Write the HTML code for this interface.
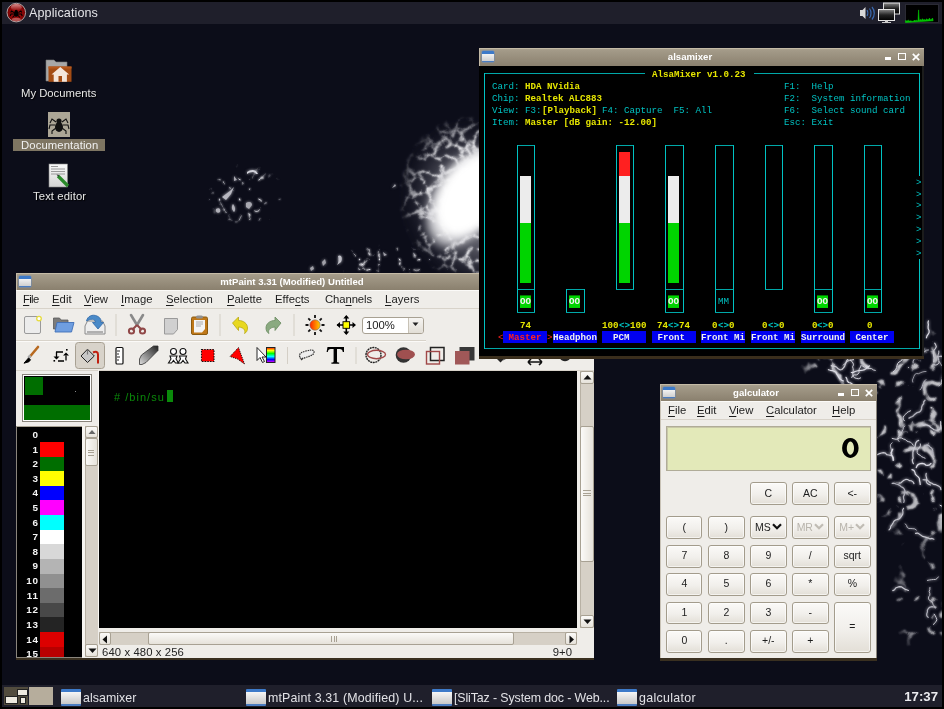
<!DOCTYPE html><html><head><meta charset="utf-8"><style>
*{margin:0;padding:0;box-sizing:border-box}
html,body{width:944px;height:709px;overflow:hidden;background:#0c0d19;font-family:"Liberation Sans",sans-serif;}
.a{position:absolute}
#scr{position:absolute;left:0;top:0;width:944px;height:709px;overflow:hidden;background:#0c0d19}
.t{position:absolute;white-space:pre;line-height:1;will-change:transform}
.tm{position:absolute;white-space:pre;font-family:'Liberation Mono',monospace;font-size:9.18px;line-height:11.95px;height:11.95px;transform:translateY(0.6px) scaleY(1.06);transform-origin:0 50%;will-change:transform}
u{text-decoration:underline;text-underline-offset:1.5px}
</style></head><body><div id="scr"><svg class="a" style="left:0;top:0" width="944" height="709" viewBox="0 0 944 709"><defs><filter id="wisp" x="0" y="0" width="944" height="709" filterUnits="userSpaceOnUse"><feTurbulence type="turbulence" baseFrequency="0.065" numOctaves="4" seed="5" result="n"/><feColorMatrix in="n" type="matrix" values="0 0 0 0 0.82  0 0 0 0 0.82  0 0 0 0 0.85  -4.6 0 0 0 1.3" result="m"/><feComposite in="m" in2="SourceGraphic" operator="in" result="c"/><feGaussianBlur in="c" stdDeviation="1.0" result="b"/><feMerge><feMergeNode in="b"/><feMergeNode in="c"/></feMerge></filter><filter id="wisp2" x="0" y="0" width="944" height="709" filterUnits="userSpaceOnUse"><feTurbulence type="turbulence" baseFrequency="0.03" numOctaves="3" seed="4" result="n"/><feColorMatrix in="n" type="matrix" values="0 0 0 0 0.85  0 0 0 0 0.85  0 0 0 0 0.88  -11 0 0 0 1.5" result="m"/><feComposite in="m" in2="SourceGraphic" operator="in" result="c"/><feGaussianBlur in="c" stdDeviation="1.3" result="b"/><feMerge><feMergeNode in="b"/><feMergeNode in="b"/><feMergeNode in="c"/></feMerge></filter><filter id="wisp3" x="0" y="0" width="944" height="709" filterUnits="userSpaceOnUse"><feTurbulence type="turbulence" baseFrequency="0.05" numOctaves="3" seed="9" result="n"/><feColorMatrix in="n" type="matrix" values="0 0 0 0 0.8  0 0 0 0 0.8  0 0 0 0 0.84  -9 0 0 0 1.0" result="m"/><feComposite in="m" in2="SourceGraphic" operator="in" result="c"/><feGaussianBlur in="c" stdDeviation="1.1" result="b"/><feMerge><feMergeNode in="b"/><feMergeNode in="b"/><feMergeNode in="c"/></feMerge></filter><radialGradient id="mask1" cx="0.5" cy="0.5" r="0.5"><stop offset="0" stop-color="#fff" stop-opacity="1"/><stop offset="0.65" stop-color="#fff" stop-opacity="0.85"/><stop offset="1" stop-color="#fff" stop-opacity="0"/></radialGradient><radialGradient id="halo" cx="0.5" cy="0.5" r="0.5"><stop offset="0" stop-color="#a0a0a8" stop-opacity="1"/><stop offset="0.6" stop-color="#7a7a84" stop-opacity="0.6"/><stop offset="1" stop-color="#505060" stop-opacity="0"/></radialGradient><radialGradient id="core" cx="0.5" cy="0.5" r="0.5"><stop offset="0" stop-color="#fff"/><stop offset="0.55" stop-color="#fcfcfc"/><stop offset="0.8" stop-color="#d8d8dc" stop-opacity="0.85"/><stop offset="1" stop-color="#a0a0a8" stop-opacity="0"/></radialGradient><filter id="blur3"><feGaussianBlur stdDeviation="3"/></filter><filter id="blur5"><feGaussianBlur stdDeviation="5"/></filter><filter id="blur8"><feGaussianBlur stdDeviation="8"/></filter><filter id="glow" x="-20%" y="-20%" width="140%" height="140%"><feGaussianBlur stdDeviation="1.4" result="b"/><feMerge><feMergeNode in="b"/><feMergeNode in="SourceGraphic"/></feMerge></filter></defs><ellipse cx="478" cy="205" rx="70" ry="82" transform="rotate(-25 478 205)" fill="url(#halo)" filter="url(#blur8)"/><ellipse cx="480" cy="203" rx="80" ry="90" transform="rotate(-25 480 203)" fill="url(#mask1)" filter="url(#wisp)"/><g filter="url(#wisp3)"><ellipse cx="385" cy="262" rx="55" ry="18" fill="url(#mask1)"/><ellipse cx="245" cy="195" rx="40" ry="32" fill="url(#mask1)" opacity="0.9"/></g><ellipse cx="466" cy="198" rx="60" ry="36" fill="url(#core)" transform="rotate(-58 466 198)" filter="url(#blur3)"/><ellipse cx="472" cy="194" rx="44" ry="27" fill="#fff" transform="rotate(-58 472 194)" filter="url(#blur5)"/><g filter="url(#wisp2)" opacity="0.8"><ellipse cx="930" cy="440" rx="78" ry="115" fill="url(#mask1)"/><ellipse cx="935" cy="600" rx="45" ry="60" fill="url(#mask1)" opacity="0.6"/><ellipse cx="862" cy="368" rx="62" ry="22" fill="url(#mask1)"/></g><g filter="url(#glow)"><polyline points="909.0,418.1 910.7,417.2 912.6,416.5 914.0,415.1 915.5,413.7 917.1,412.6 919.1,412.2 920.6,410.9 921.6,409.2 921.6,407.2 922.4,405.3 923.7,403.8 923.7,401.8 925.0,400.3" fill="none" stroke="#b0b0ba" stroke-width="1.3" stroke-linecap="round" stroke-linejoin="round"/><polyline points="921.9,424.6 923.7,425.4 925.6,424.8 927.6,425.3 929.4,426.1 930.8,427.5 932.5,428.6 934.1,429.8 936.0,430.3 938.0,430.1 939.9,429.3 940.7,427.5 940.5,425.5 940.7,423.5 940.6,421.5" fill="none" stroke="#c8c8d0" stroke-width="1.1" stroke-linecap="round" stroke-linejoin="round"/><polyline points="939.6,361.8 940.2,363.7 941.7,365.0 942.7,366.8 943.8,368.4 944.1,370.4 944.8,372.3 944.1,374.2 942.7,375.5 942.4,377.5 943.0,379.4 942.4,381.4 942.0,383.3 940.4,384.5 939.0,386.0" fill="none" stroke="#c8c8d0" stroke-width="0.8" stroke-linecap="round" stroke-linejoin="round"/><polyline points="920.3,443.9 920.5,445.9 919.5,447.6 917.9,448.8 917.2,450.7 917.2,452.7 918.2,454.4 920.1,455.2 921.4,456.6 923.3,457.4 925.1,458.2" fill="none" stroke="#c8c8d0" stroke-width="1.0" stroke-linecap="round" stroke-linejoin="round"/><polyline points="892.2,438.4 894.1,438.9 896.1,439.3 898.0,438.8 899.7,437.8 901.7,438.0 903.5,439.0 905.4,439.5 906.8,441.0 908.6,441.7 910.6,442.2 912.0,443.6 913.2,445.2" fill="none" stroke="#dcdce4" stroke-width="0.9" stroke-linecap="round" stroke-linejoin="round"/><polyline points="943.3,377.2 942.3,378.9 941.6,380.8 942.1,382.7 943.3,384.3 944.2,386.1 946.0,387.0 948.0,387.4 949.8,388.3 951.8,388.1 953.8,388.1 955.5,389.1" fill="none" stroke="#dcdce4" stroke-width="0.9" stroke-linecap="round" stroke-linejoin="round"/><polyline points="904.7,426.0 903.4,427.5 903.0,429.5 902.2,431.3 901.3,433.1 900.0,434.6 898.9,436.3 897.8,438.0 897.9,440.0 899.1,441.5" fill="none" stroke="#c8c8d0" stroke-width="0.9" stroke-linecap="round" stroke-linejoin="round"/><polyline points="912.8,382.1 912.4,380.1 913.2,378.3 913.9,376.4 914.7,374.6 916.4,373.5 918.4,373.7 920.2,372.9 922.1,372.1 924.0,371.6 926.0,371.5" fill="none" stroke="#b0b0ba" stroke-width="0.8" stroke-linecap="round" stroke-linejoin="round"/><polyline points="893.6,460.0 893.3,458.0 892.4,456.2 890.6,455.3 888.6,455.0 886.7,454.7 885.4,453.1 883.4,452.6 881.5,453.0 879.6,453.6 877.8,454.6" fill="none" stroke="#c8c8d0" stroke-width="1.2" stroke-linecap="round" stroke-linejoin="round"/><polyline points="913.4,463.7 912.6,461.9 912.3,459.9 913.2,458.2 912.9,456.2 912.9,454.2 912.9,452.2 913.5,450.3 913.6,448.3 915.0,446.9 915.4,444.9 915.8,442.9 916.9,441.3 918.7,440.4" fill="none" stroke="#c8c8d0" stroke-width="1.2" stroke-linecap="round" stroke-linejoin="round"/><polyline points="925.0,445.6 927.0,445.1 928.9,445.6 930.3,447.1 931.8,448.3 932.7,450.1 932.7,452.1 932.4,454.1" fill="none" stroke="#b0b0ba" stroke-width="1.1" stroke-linecap="round" stroke-linejoin="round"/><polyline points="904.5,420.8 903.2,419.2 903.2,417.2 904.2,415.5 905.7,414.2 907.0,412.6 908.7,411.6 910.5,410.8" fill="none" stroke="#c8c8d0" stroke-width="1.0" stroke-linecap="round" stroke-linejoin="round"/><polyline points="933.7,361.9 933.9,359.9 934.2,357.9 933.7,356.0 933.7,354.0 933.7,352.0 934.1,350.0 935.4,348.6 936.3,346.7 935.7,344.8 934.7,343.1" fill="none" stroke="#c8c8d0" stroke-width="1.1" stroke-linecap="round" stroke-linejoin="round"/><polyline points="893.0,372.0 894.6,370.9 895.8,369.3 896.7,367.5 897.0,365.5 897.6,363.6 898.9,362.1 900.7,361.2 902.0,359.7 902.5,357.8 902.3,355.8 903.2,354.0 903.4,352.0 902.5,350.2" fill="none" stroke="#dcdce4" stroke-width="1.0" stroke-linecap="round" stroke-linejoin="round"/><polyline points="937.3,356.8 939.3,356.5 941.3,356.2 943.1,357.0 944.4,358.5 945.9,359.8 947.4,361.2 948.5,362.8 949.0,364.8" fill="none" stroke="#b0b0ba" stroke-width="1.2" stroke-linecap="round" stroke-linejoin="round"/><polyline points="920.0,389.8 921.3,388.3 922.2,386.5 922.7,384.6 923.5,382.8 924.5,381.0 925.9,379.6" fill="none" stroke="#b0b0ba" stroke-width="1.0" stroke-linecap="round" stroke-linejoin="round"/><polyline points="892.2,442.8 890.7,444.2 890.3,446.1 890.9,448.0 891.4,450.0 891.5,452.0 892.0,453.9" fill="none" stroke="#c8c8d0" stroke-width="0.8" stroke-linecap="round" stroke-linejoin="round"/><polyline points="892.7,449.2 891.9,451.1 891.0,452.9 891.5,454.8 892.6,456.5 893.0,458.4 893.2,460.4" fill="none" stroke="#dcdce4" stroke-width="1.3" stroke-linecap="round" stroke-linejoin="round"/><polyline points="912.0,469.6 913.9,470.4 914.9,472.2 915.3,474.1 916.7,475.6 918.2,476.9 919.4,478.5 919.5,480.5 920.0,482.5 920.2,484.5" fill="none" stroke="#dcdce4" stroke-width="1.2" stroke-linecap="round" stroke-linejoin="round"/><polyline points="931.0,463.4 929.6,464.8 927.7,465.4 925.7,465.1 924.2,463.8 922.2,463.4 920.3,463.7 918.4,464.3 917.1,465.8 916.3,467.6" fill="none" stroke="#dcdce4" stroke-width="1.3" stroke-linecap="round" stroke-linejoin="round"/><polyline points="940.9,489.6 940.5,487.7 939.0,486.3 937.3,485.4 935.4,484.6 933.4,484.4 931.9,483.2 929.9,482.6 928.5,481.2 927.0,479.9 925.0,479.9 923.0,479.7" fill="none" stroke="#c8c8d0" stroke-width="1.1" stroke-linecap="round" stroke-linejoin="round"/><polyline points="940.1,505.3 941.9,506.2 943.4,507.6 943.8,509.5 944.2,511.5 943.4,513.3 943.8,515.3 944.8,517.0 945.8,518.7 947.3,520.1 948.2,521.8 948.8,523.7 949.3,525.7 948.9,527.6 948.3,529.5" fill="none" stroke="#dcdce4" stroke-width="1.0" stroke-linecap="round" stroke-linejoin="round"/><polyline points="915.5,533.4 917.5,533.1 919.3,534.1 921.0,535.2 922.5,536.4 924.5,536.9 926.4,537.4 928.3,538.0 930.1,538.9 932.1,538.4 933.9,539.3" fill="none" stroke="#c8c8d0" stroke-width="1.1" stroke-linecap="round" stroke-linejoin="round"/><polyline points="916.4,530.1 914.8,528.9 912.9,528.7 910.9,528.5 908.9,528.5 907.2,527.4 906.6,525.5 905.3,523.9" fill="none" stroke="#b0b0ba" stroke-width="1.0" stroke-linecap="round" stroke-linejoin="round"/><polyline points="903.8,502.5 904.2,500.6 903.6,498.6 903.4,496.6 904.3,494.9 904.3,492.9 905.0,491.0 904.3,489.1 903.0,487.6 901.2,486.7 899.7,485.4 897.9,484.5 896.0,484.0 894.1,483.2 892.2,483.4" fill="none" stroke="#b0b0ba" stroke-width="1.2" stroke-linecap="round" stroke-linejoin="round"/><polyline points="903.6,508.3 902.6,510.0 902.9,512.0 902.8,514.0 901.8,515.7 900.6,517.3 899.3,518.8 897.4,519.5 895.5,520.0 893.9,521.3 893.0,523.1 891.9,524.8 890.7,526.3 890.4,528.3 889.0,529.8" fill="none" stroke="#c8c8d0" stroke-width="1.1" stroke-linecap="round" stroke-linejoin="round"/><polyline points="914.0,483.6 913.0,481.9 911.3,480.7 909.3,480.6 907.7,479.5 905.7,479.4 903.9,480.3 902.3,481.5 900.9,482.9 898.9,483.2" fill="none" stroke="#c8c8d0" stroke-width="1.1" stroke-linecap="round" stroke-linejoin="round"/><polyline points="930.4,485.0 928.6,484.3 927.0,483.1 926.3,481.2 926.9,479.3 926.4,477.4 925.9,475.4 926.2,473.4" fill="none" stroke="#c8c8d0" stroke-width="1.1" stroke-linecap="round" stroke-linejoin="round"/><polyline points="927.4,580.4 929.4,580.0 931.4,579.7 933.4,579.5 935.4,579.5 937.1,578.5 938.3,576.9" fill="none" stroke="#c8c8d0" stroke-width="0.9" stroke-linecap="round" stroke-linejoin="round"/><polyline points="933.6,624.5 934.7,622.8 936.2,621.5 936.8,619.6 936.2,617.7 935.3,615.9 934.2,614.2" fill="none" stroke="#c8c8d0" stroke-width="1.0" stroke-linecap="round" stroke-linejoin="round"/><polyline points="908.4,590.5 906.6,589.8 904.7,589.1 903.1,587.9 901.4,586.8 899.4,586.6 897.5,587.3 895.6,588.0 894.6,589.7 892.8,590.6" fill="none" stroke="#c8c8d0" stroke-width="1.2" stroke-linecap="round" stroke-linejoin="round"/><polyline points="928.2,617.3 926.8,615.9 926.7,613.9 927.4,612.0 927.4,610.0 928.5,608.3 930.1,607.1 932.0,606.6 934.0,607.0 936.0,607.1" fill="none" stroke="#b0b0ba" stroke-width="1.2" stroke-linecap="round" stroke-linejoin="round"/><polyline points="935.2,608.2 934.6,606.3 933.2,604.8 932.6,602.9 931.5,601.3 929.6,600.5 928.5,598.9 928.6,596.9 929.8,595.3 929.8,593.3 929.2,591.4 929.8,589.5 929.9,587.5" fill="none" stroke="#c8c8d0" stroke-width="0.9" stroke-linecap="round" stroke-linejoin="round"/><polyline points="850.3,360.1 851.9,361.4 853.0,363.0 853.5,364.9 852.6,366.8 853.1,368.7 853.3,370.7 852.7,372.6 852.9,374.6 853.3,376.6 854.8,377.9 856.8,378.5 858.7,378.7 860.6,377.9" fill="none" stroke="#dcdce4" stroke-width="0.9" stroke-linecap="round" stroke-linejoin="round"/><polyline points="875.3,370.4 873.3,369.9 871.8,368.7 869.8,368.5 867.8,368.1 866.2,367.0 864.2,367.1 862.5,366.0" fill="none" stroke="#dcdce4" stroke-width="0.9" stroke-linecap="round" stroke-linejoin="round"/><polyline points="853.6,359.7 851.6,360.0 849.6,360.3 847.8,361.1 846.1,362.2 844.8,363.7 843.4,365.1" fill="none" stroke="#dcdce4" stroke-width="1.0" stroke-linecap="round" stroke-linejoin="round"/><polyline points="843.5,381.0 841.6,380.3 840.2,379.0 838.9,377.4 837.9,375.7 836.7,374.1 835.9,372.2 834.2,371.2 832.3,370.6 830.3,370.3 828.4,369.7" fill="none" stroke="#dcdce4" stroke-width="1.2" stroke-linecap="round" stroke-linejoin="round"/><polyline points="846.0,377.3 846.9,379.1 847.3,381.0 848.7,382.5 850.6,382.9 852.2,384.1 852.9,386.0 854.4,387.3 854.8,389.3 855.9,391.0 856.4,392.9 858.0,394.1 859.7,395.2 861.7,395.2" fill="none" stroke="#dcdce4" stroke-width="1.2" stroke-linecap="round" stroke-linejoin="round"/><polyline points="847.8,359.3 846.6,360.9 846.0,362.8 845.2,364.6 844.5,366.5 843.2,368.1 841.9,369.5 839.9,369.8 838.1,368.8 836.8,367.3 835.0,366.4 833.0,366.5 831.3,365.6" fill="none" stroke="#c8c8d0" stroke-width="1.2" stroke-linecap="round" stroke-linejoin="round"/><polyline points="861.2,365.1 860.6,367.0 859.4,368.5 858.9,370.5 859.1,372.4 858.0,374.1 856.2,375.0 854.2,374.8 852.5,375.8 851.7,377.6" fill="none" stroke="#dcdce4" stroke-width="0.9" stroke-linecap="round" stroke-linejoin="round"/><polyline points="851.3,372.5 853.3,372.5 855.0,371.5 856.9,371.0 858.9,370.5 860.9,370.5 862.8,370.1 864.7,369.6 866.3,368.4 867.6,366.9 869.4,365.9" fill="none" stroke="#dcdce4" stroke-width="1.2" stroke-linecap="round" stroke-linejoin="round"/><polyline points="926.4,337.8 927.0,335.8 928.2,334.2 929.1,332.5 929.1,330.5 928.2,328.7 928.1,326.7 928.4,324.7 928.0,322.7 928.4,320.8" fill="none" stroke="#dcdce4" stroke-width="1.2" stroke-linecap="round" stroke-linejoin="round"/><polyline points="928.5,350.0 926.5,350.2 924.9,351.4 923.3,352.5 921.6,353.7 919.7,354.3 918.1,355.5 916.1,356.0 914.8,357.4 914.1,359.3 913.1,361.0 913.1,363.0" fill="none" stroke="#b0b0ba" stroke-width="1.0" stroke-linecap="round" stroke-linejoin="round"/><polyline points="938.8,351.0 938.8,353.0 938.1,354.9 937.8,356.8 938.6,358.7 938.8,360.7 938.9,362.7 937.8,364.3 935.9,365.1 933.9,364.7" fill="none" stroke="#c8c8d0" stroke-width="1.0" stroke-linecap="round" stroke-linejoin="round"/></g><g filter="url(#glow)"><path d="M222 197l8-6 4-4-3 7-5 6z" fill="#b8b8c0"/><path d="M247 172c4-3 9-3 11 2l-2 0c-2-3-6-2-9 0z" fill="#d0d0d8"/><path d="M216 209c3-2 5 0 4 3-2 2-5 0-4-3z" fill="#b0b0b8"/><path d="M233 204c2 3 3 6 1 8-2-2-3-5-1-8z" fill="#b0b0b8"/><path d="M246 203c3-2 6-1 6 2l-3 4-3-2z" fill="#a8a8b0"/><path d="M234 176l3 4-3 1z" fill="#a8a8b0"/><path d="M338 256c3-2 5 2 3 6l-4 3c2-3 2-6 1-9z" fill="#c0c0c8"/><path d="M322 262l3-3 1 4-3 3z" fill="#a0a0a8"/><path d="M310 268l3-2 1 3-3 2z" fill="#a0a0a8"/><path d="M392 188l3-4 1 2z" fill="#a0a0a8"/><path d="M383 252l4 3-3 1z" fill="#a0a0a8"/></g></svg><svg class="a" style="left:44px;top:58px" width="30" height="26" viewBox="44 58 30 26"><path d="M46 60h8l2 2h11v19h-21z" fill="#a8a8a8" stroke="#777" stroke-width="0.6"/><rect x="48.5" y="66.5" width="23" height="15.3" fill="#a44c14"/><rect x="48.5" y="66.5" width="23" height="2" fill="#b85a1e"/><path d="M51.5 74.5l8.8-7.5 8.8 7.5h-2.2v7.3h-13.2v-7.3z" fill="#f4e6dc"/><rect x="58.5" y="76" width="3.5" height="5.8" fill="#a44c14"/></svg><div class="t" style="left:21.3px;top:87.5px;font-size:11.3px;color:#e6e6e6;font-weight:normal;letter-spacing:-0.004px;text-shadow:1px 1px 1px #000">My Documents</div><div class="a" style="left:48px;top:111.5px;width:21.5px;height:25px;background:#aca696;"></div><svg class="a" style="left:48px;top:112px" width="22" height="24" viewBox="0 0 22 24"><g stroke="#111" stroke-width="1.1" fill="none"><path d="M8 10l-4-3-2 4M14 10l4-3 2 4M7 13l-5 0-1 4M15 13l5 0 1 4M8 16l-4 3 0 3M14 16l4 3 0 3"/></g><ellipse cx="11" cy="15" rx="4" ry="5" fill="#111"/><circle cx="11" cy="9" r="2.6" fill="#111"/></svg><div class="a" style="left:12.8px;top:138.8px;width:92.2px;height:12px;background:#7e7562;"></div><div class="t" style="left:20.5px;top:139.5px;font-size:11.3px;color:#f0f0f0;font-weight:normal;letter-spacing:0.109px;">Documentation</div><svg class="a" style="left:46px;top:162px" width="28" height="28" viewBox="46 162 28 28"><defs><linearGradient id="pgw" x1="0" y1="0" x2="0" y2="1"><stop offset="0" stop-color="#fafafa"/><stop offset="1" stop-color="#d4d4d4"/></linearGradient></defs><rect x="49" y="164" width="18.5" height="23" fill="url(#pgw)" stroke="#888" stroke-width="0.6"/><path d="M51 166.5h7M51 169h14M51 171.5h14M51 174h14" stroke="#9a9a9a" stroke-width="1.1"/><path d="M58 176l10 10" stroke="#2a8a2a" stroke-width="3.2"/><path d="M56.5 174.5l2.5 0.5-0.5 2z" fill="#333"/></svg><div class="t" style="left:32.5px;top:190.5px;font-size:11.3px;color:#e6e6e6;font-weight:normal;letter-spacing:0.098px;text-shadow:1px 1px 1px #000">Text editor</div><div class="a" style="left:16px;top:273px;width:578px;height:387px;background:#efede9;"></div><div class="a" style="left:16px;top:273px;width:578px;height:17px;background:linear-gradient(#aea592 0,#a49b89 2px,#8a806e 100%);box-shadow:inset 1px 1px 0 #c4baa6"></div><div class="a" style="left:19px;top:276px;width:12px;height:11px;border-radius:1px;background:linear-gradient(#3d7ac9 0,#3d7ac9 3px,#f2f2f2 3px,#cfcfcf 10px,#4a7cc0 10px);box-shadow:0 0 0 0.5px #6a8ab8"></div><div class="t" style="left:192px;top:277px;width:200px;text-align:center;font-size:9.6px;font-weight:bold;color:#fff">mtPaint 3.31 (Modified) Untitled</div><div class="a" style="left:16px;top:290px;width:578px;height:19px;background:#efede9;border-top:1px solid #fbfaf8;border-bottom:1px solid #d8d3ca"></div><div class="t" style="left:23.2px;top:293.5px;font-size:11.3px;color:#1c1c1c;font-weight:normal;letter-spacing:-0.676px;"><u>F</u>ile</div><div class="t" style="left:51.7px;top:293.5px;font-size:11.3px;color:#1c1c1c;font-weight:normal;letter-spacing:0.033px;"><u>E</u>dit</div><div class="t" style="left:83.7px;top:293.5px;font-size:11.3px;color:#1c1c1c;font-weight:normal;letter-spacing:-0.099px;"><u>V</u>iew</div><div class="t" style="left:120.8px;top:293.5px;font-size:11.3px;color:#1c1c1c;font-weight:normal;letter-spacing:0.019px;"><u>I</u>mage</div><div class="t" style="left:166.3px;top:293.5px;font-size:11.3px;color:#1c1c1c;font-weight:normal;letter-spacing:0.024px;"><u>S</u>election</div><div class="t" style="left:226.8px;top:293.5px;font-size:11.3px;color:#1c1c1c;font-weight:normal;letter-spacing:-0.039px;"><u>P</u>alette</div><div class="t" style="left:275.0px;top:293.5px;font-size:11.3px;color:#1c1c1c;font-weight:normal;letter-spacing:0.025px;">Effe<u>c</u>ts</div><div class="t" style="left:324.5px;top:293.5px;font-size:11.3px;color:#1c1c1c;font-weight:normal;letter-spacing:-0.092px;">Cha<u>n</u>nels</div><div class="t" style="left:384.9px;top:293.5px;font-size:11.3px;color:#1c1c1c;font-weight:normal;letter-spacing:0.113px;"><u>L</u>ayers</div><div class="a" style="left:16px;top:340px;width:410px;height:1px;background:#d8d3ca;"></div><div class="a" style="left:16px;top:341px;width:410px;height:1px;background:#fbfaf8;"></div><div class="a" style="left:16px;top:370px;width:578px;height:1px;background:#d8d3ca;"></div><svg class="a" style="left:16px;top:309px" width="578" height="61" viewBox="16 309 578 61"><rect x="24.5" y="316.5" width="16" height="17" rx="1.5" fill="#ececec" stroke="#9a9a9a" stroke-width="1"/><circle cx="39" cy="318.6" r="2.3" fill="#fff" stroke="#e6dc3c" stroke-width="1.3"/><path d="M53.5 318h6l1.5 2h7v9h-14.5z" fill="#7b7b7b" stroke="#5a5a5a" stroke-width="0.8"/><path d="M57 322.5h17l-2.5 9.5h-16.5z" fill="#6f9ee0" stroke="#3f6fb8" stroke-width="0.9"/><path d="M85 326l2.5-5h15l2.5 5v8h-20z" fill="#eee" stroke="#8a8a8a" stroke-width="1"/><rect x="87" y="331" width="16" height="2" fill="#b0b0b0"/><path d="M86.5 321c1-5 6-7 10.5-5s4 5 4 6.5h2.5l-5.5 6.5-5.5-6.5h2.8c0-1.8-0.8-3-3-3.2s-4 1-5.8 1.7z" fill="#4a8ac8" stroke="#2e68a8" stroke-width="0.8"/><rect x="115.5" y="314" width="1" height="22" fill="#d4cfc6"/><path d="M131 315l6 10M143 315l-6 10" stroke="#8a8a8a" stroke-width="2.6" stroke-linecap="round"/><path d="M137 325l-5 5M137 325l5 5" stroke="#904848" stroke-width="2"/><circle cx="131.5" cy="331" r="2.6" fill="none" stroke="#904848" stroke-width="2"/><circle cx="142.5" cy="331" r="2.6" fill="none" stroke="#904848" stroke-width="2"/><path d="M164.5 318.5h13v11l-4 4.5h-9z" fill="#d0d0d0" stroke="#9a9a9a" stroke-width="1"/><rect x="191.5" y="317" width="16" height="17.5" rx="1.5" fill="#c07818" stroke="#8a5a10" stroke-width="1"/><path d="M194 320h11v9l-3 3.5h-8z" fill="#f4f4f4"/><rect x="196" y="315.5" width="7" height="3" rx="1.5" fill="#909090"/><path d="M196 322h7M196 324h7M196 326h5" stroke="#999" stroke-width="0.8"/><rect x="219.5" y="314" width="1" height="22" fill="#d4cfc6"/><path d="M232.5 323l6-6v3.5c5 0 9 3 9 7.5 0 2.5-1 4.5-3 5.5 1-2 0.5-6-6-6.5v3.5z" fill="#e8d820" stroke="#b8a810" stroke-width="0.8"/><path d="M281 323l-6-6v3.5c-5 0-9 3-9 7.5 0 2.5 1 4.5 3 5.5-1-2-0.5-6 6-6.5v3.5z" fill="#8aaa80" stroke="#6a8a60" stroke-width="0.8"/><rect x="293.5" y="314" width="1" height="22" fill="#d4cfc6"/><defs><linearGradient id="sung" x1="0" x2="1"><stop offset="0" stop-color="#ff2000"/><stop offset="1" stop-color="#ffd000"/></linearGradient></defs><path d="M315 315v3M315 332v3M305.5 325h3M321.5 325h3M308.3 318.3l2 2M319.7 329.7l2 2M321.7 318.3l-2 2M310.3 329.7l-2 2" stroke="#111" stroke-width="1.8"/><circle cx="315" cy="325" r="5.2" fill="url(#sung)" stroke="#777" stroke-width="0.6"/><path d="M346.3 316v18M337 325h18" stroke="#000" stroke-width="1.6"/><path d="M346.3 315l-3 3.5h6zM346.3 335l-3-3.5h6zM336.5 325l3.5-3v6zM356 325l-3.5-3v6z" fill="#000"/><rect x="343" y="321.7" width="6.6" height="6.6" fill="#ffff00" stroke="#000" stroke-width="0.9"/><path d="M38 347l-8 9.5" stroke="#b86a20" stroke-width="2.6" stroke-linecap="round"/><path d="M30.5 355.5l-2 2.5" stroke="#aaa" stroke-width="3"/><path d="M28.5 358l-4.5 5.2 5-1.5 1.5-2z" fill="#000" stroke="#000" stroke-width="1"/><path d="M56 352h7M58 361h6M56.5 352v5M66 360.5v-5" stroke="#000" stroke-width="1.3"/><path d="M53.5 356.5h6l-3 3zM63 355.5h6l-3-3z" fill="#000"/><rect x="66" y="349" width="1.6" height="1.6" fill="#000"/><rect x="53.5" y="360" width="1.6" height="1.6" fill="#000"/><rect x="75.5" y="342.5" width="29" height="26" rx="3" fill="#d8d3ca" stroke="#a8a193" stroke-width="1"/><path d="M81 356l6.5-6.8 6.8 6.8-6.8 6.5z" fill="#c8c8c8" stroke="#222" stroke-width="1"/><path d="M87.5 349.5v5" stroke="#777" stroke-width="1.2"/><path d="M93 352.5c3-1.5 5-0.5 5 2v9" stroke="#c02010" stroke-width="2" fill="none"/><rect x="116" y="347.5" width="7" height="16.5" rx="1" fill="#fff" stroke="#111" stroke-width="1.2"/><path d="M117 351h3M117 354h2M117 357h3M117 360h2" stroke="#111" stroke-width="0.9"/><defs><linearGradient id="pg" x1="0" y1="1" x2="1" y2="0"><stop offset="0" stop-color="#ddd"/><stop offset="1" stop-color="#222"/></linearGradient></defs><path d="M139.5 359l2-4 12-9h4.5v4.5l-12 12-4 2h-2.5z" fill="url(#pg)" stroke="#333" stroke-width="0.8"/><g fill="#fff" stroke="#111" stroke-width="1.1"><circle cx="173.5" cy="351.5" r="3"/><circle cx="183" cy="351.5" r="3"/><path d="M170 356h7l-1 3 2.5 4h-3l-2-2.5-2 2.5h-3l2.5-4z"/><path d="M179.5 356h7l-1 3 2.5 4h-3l-2-2.5-2 2.5h-3l2.5-4z"/></g><rect x="201.5" y="349.5" width="12.5" height="12" fill="#f00" stroke="#111" stroke-width="1.1" stroke-dasharray="1.5 1.2"/><path d="M238.5 347.5l-8.5 9 7.5 2.5 7 5z" fill="#f00" stroke="#111" stroke-width="0.9" stroke-dasharray="1.2 1"/><defs><linearGradient id="rb" x1="0" y1="0" x2="0" y2="1"><stop offset="0" stop-color="#f00"/><stop offset="0.2" stop-color="#ff0"/><stop offset="0.4" stop-color="#0f0"/><stop offset="0.6" stop-color="#0ff"/><stop offset="0.8" stop-color="#00f"/><stop offset="1" stop-color="#f0f"/></linearGradient></defs><rect x="266.5" y="347.5" width="8.5" height="15" fill="url(#rb)" stroke="#222" stroke-width="1"/><path d="M257 347.5v13l3-3 2.5 5 2-1-2.5-4.5h4z" fill="#fff" stroke="#111" stroke-width="0.9"/><rect x="287" y="347" width="1" height="17" fill="#d4cfc6"/><path d="M300 357c-2-3 2-5 6-6s8-2 8 1-4 4-7 5-7 3-7 0z" fill="#eee" stroke="#333" stroke-width="1.2" stroke-dasharray="1.5 0.8"/><path d="M301 360l2-2" stroke="#333" stroke-width="1.2"/><path d="M327.5 347h16.5v5h-1.2c-0.4-2.2-1.2-3-3-3h-2.8v12.3c0 1 0.5 1.3 2.2 1.3v1.2h-7.8v-1.2c1.7 0 2.2-0.3 2.2-1.3v-12.3h-2.8c-1.8 0-2.6 0.8-3 3h-1.2z" fill="#000"/><rect x="355.5" y="347" width="1" height="17" fill="#d4cfc6"/><circle cx="373.5" cy="355" r="7.5" fill="none" stroke="#222" stroke-width="1.4" stroke-dasharray="2 0.6"/><ellipse cx="376.5" cy="354.5" rx="9" ry="4.2" fill="none" stroke="#a04848" stroke-width="1.4"/><circle cx="403.5" cy="355" r="7.8" fill="#333"/><ellipse cx="406" cy="354.5" rx="9" ry="4.8" fill="#a05050"/><rect x="430.5" y="347.5" width="13.5" height="13" fill="none" stroke="#222" stroke-width="1.5"/><rect x="426.5" y="351.5" width="13" height="12.5" fill="none" stroke="#a04848" stroke-width="1.4"/><rect x="459.5" y="347" width="15" height="13.5" fill="#383838"/><rect x="455" y="351" width="14.5" height="13.5" fill="#a05858"/><path d="M496 358l4.5 4.5 4.5-4.5z" fill="#222"/><path d="M503 360l3-1.5" stroke="#555" stroke-width="1"/><path d="M528 362h14M528 362l3-3M528 362l3 3M542 362l-3-3M542 362l-3 3" stroke="#111" stroke-width="1.6" fill="none"/><path d="M560 358.5c2 3.5 8 3.5 10 0z" fill="#222"/></svg><div class="a" style="left:362px;top:316.5px;width:62px;height:17px;background:#fff;border:1px solid #a8a193;border-radius:3px"></div><div class="a" style="left:408px;top:317.5px;width:15px;height:15px;background:linear-gradient(#f6f5f2,#e2ded6);border-left:1px solid #c8c2b6;border-radius:0 2px 2px 0"></div><svg class="a" style="left:412px;top:322px" width="8" height="5"><path d="M0.5 0.5h6l-3 3.5z" fill="#222"/></svg><div class="t" style="left:366px;top:320px;font-size:11.3px;color:#222;font-weight:normal;">100%</div><div class="a" style="left:24px;top:376px;width:66px;height:44px;background:#000;box-shadow:0 0 0 1px #fff,0 0 0 2px #8a857c"></div><div class="a" style="left:25px;top:377px;width:18px;height:18px;background:#006e00;"></div><div class="a" style="left:24px;top:405px;width:66px;height:15px;background:#006e00;"></div><div class="a" style="left:75px;top:391px;width:1px;height:1px;background:#888;"></div><div class="a" style="left:16px;top:425.5px;width:66px;height:231.5px;background:#000;border-left:1px solid #8a857c;border-top:1px solid #a8a294"></div><div class="t" style="left:12px;top:429.90px;width:26.5px;text-align:right;font-size:9.9px;font-weight:bold;color:#f4f4f4;letter-spacing:0.6px">0</div><div class="a" style="left:40px;top:441.92px;width:24px;height:15.22px;background:#ff0000;"></div><div class="t" style="left:12px;top:444.52px;width:26.5px;text-align:right;font-size:9.9px;font-weight:bold;color:#f4f4f4;letter-spacing:0.6px">1</div><div class="a" style="left:40px;top:456.54px;width:24px;height:15.22px;background:#006e00;"></div><div class="t" style="left:12px;top:459.14px;width:26.5px;text-align:right;font-size:9.9px;font-weight:bold;color:#f4f4f4;letter-spacing:0.6px">2</div><div class="a" style="left:40px;top:471.16px;width:24px;height:15.22px;background:#ffff00;"></div><div class="t" style="left:12px;top:473.76px;width:26.5px;text-align:right;font-size:9.9px;font-weight:bold;color:#f4f4f4;letter-spacing:0.6px">3</div><div class="a" style="left:40px;top:485.78px;width:24px;height:15.22px;background:#0000ff;"></div><div class="t" style="left:12px;top:488.38px;width:26.5px;text-align:right;font-size:9.9px;font-weight:bold;color:#f4f4f4;letter-spacing:0.6px">4</div><div class="a" style="left:40px;top:500.4px;width:24px;height:15.22px;background:#ff00ff;"></div><div class="t" style="left:12px;top:503.00px;width:26.5px;text-align:right;font-size:9.9px;font-weight:bold;color:#f4f4f4;letter-spacing:0.6px">5</div><div class="a" style="left:40px;top:515.02px;width:24px;height:15.22px;background:#00ffff;"></div><div class="t" style="left:12px;top:517.62px;width:26.5px;text-align:right;font-size:9.9px;font-weight:bold;color:#f4f4f4;letter-spacing:0.6px">6</div><div class="a" style="left:40px;top:529.64px;width:24px;height:15.22px;background:#ffffff;"></div><div class="t" style="left:12px;top:532.24px;width:26.5px;text-align:right;font-size:9.9px;font-weight:bold;color:#f4f4f4;letter-spacing:0.6px">7</div><div class="a" style="left:40px;top:544.26px;width:24px;height:15.22px;background:#d8d8d8;"></div><div class="t" style="left:12px;top:546.86px;width:26.5px;text-align:right;font-size:9.9px;font-weight:bold;color:#f4f4f4;letter-spacing:0.6px">8</div><div class="a" style="left:40px;top:558.88px;width:24px;height:15.22px;background:#b4b4b4;"></div><div class="t" style="left:12px;top:561.48px;width:26.5px;text-align:right;font-size:9.9px;font-weight:bold;color:#f4f4f4;letter-spacing:0.6px">9</div><div class="a" style="left:40px;top:573.5px;width:24px;height:15.22px;background:#909090;"></div><div class="t" style="left:12px;top:576.10px;width:26.5px;text-align:right;font-size:9.9px;font-weight:bold;color:#f4f4f4;letter-spacing:0.6px">10</div><div class="a" style="left:40px;top:588.12px;width:24px;height:15.22px;background:#6c6c6c;"></div><div class="t" style="left:12px;top:590.72px;width:26.5px;text-align:right;font-size:9.9px;font-weight:bold;color:#f4f4f4;letter-spacing:0.6px">11</div><div class="a" style="left:40px;top:602.74px;width:24px;height:15.22px;background:#484848;"></div><div class="t" style="left:12px;top:605.34px;width:26.5px;text-align:right;font-size:9.9px;font-weight:bold;color:#f4f4f4;letter-spacing:0.6px">12</div><div class="a" style="left:40px;top:617.36px;width:24px;height:15.22px;background:#242424;"></div><div class="t" style="left:12px;top:619.96px;width:26.5px;text-align:right;font-size:9.9px;font-weight:bold;color:#f4f4f4;letter-spacing:0.6px">13</div><div class="a" style="left:40px;top:631.98px;width:24px;height:15.22px;background:#dd0000;"></div><div class="t" style="left:12px;top:634.58px;width:26.5px;text-align:right;font-size:9.9px;font-weight:bold;color:#f4f4f4;letter-spacing:0.6px">14</div><div class="a" style="left:40px;top:646.6px;width:24px;height:10.5px;background:#b80000;"></div><div class="t" style="left:12px;top:649.20px;width:26.5px;text-align:right;font-size:9.9px;font-weight:bold;color:#f4f4f4;letter-spacing:0.6px">15</div><div class="a" style="left:16px;top:657px;width:66px;height:1px;background:#8a857c;"></div><div class="a" style="left:82px;top:426px;width:3px;height:231px;background:#f6f4f0;"></div><div class="a" style="left:85px;top:426px;width:13px;height:231px;background:#d6d0c6;border-left:1px solid #b8b1a4"></div><div class="a" style="left:85px;top:426px;width:13px;height:12px;background:linear-gradient(#fbfaf8,#e6e2da);border:1px solid #a8a193;border-radius:2px"></div><svg class="a" style="left:88px;top:429px" width="8" height="6"><path d="M0.5 5h7l-3.5-4z" fill="#666"/></svg><div class="a" style="left:85px;top:438px;width:13px;height:28px;background:linear-gradient(90deg,#fbfaf8,#e6e2da);border:1px solid #a8a193;border-radius:2px"></div><div class="a" style="left:88px;top:449.5px;width:6px;height:1px;background:#a8a193;"></div><div class="a" style="left:88px;top:452px;width:6px;height:1px;background:#a8a193;"></div><div class="a" style="left:88px;top:454.5px;width:6px;height:1px;background:#a8a193;"></div><div class="a" style="left:85px;top:644px;width:13px;height:13px;background:linear-gradient(#fbfaf8,#e6e2da);border:1px solid #a8a193;border-radius:2px"></div><svg class="a" style="left:87.5px;top:648px" width="9" height="6"><path d="M0.5 0.5h8l-4 4.5z" fill="#111"/></svg><div class="a" style="left:98px;top:370px;width:1px;height:258px;background:#f8f6f2;"></div><div class="a" style="left:99px;top:371px;width:478px;height:257px;background:#000;"></div><div class="t" style="left:113.5px;top:392px;font-size:11px;color:#0a8a0a;font-weight:normal;letter-spacing:1.023px;"># /bin/su</div><div class="a" style="left:167px;top:390px;width:6px;height:12px;background:#0a8a0a;"></div><div class="a" style="left:580px;top:371px;width:14px;height:257px;background:#d6d0c6;border-left:1px solid #b8b1a4"></div><div class="a" style="left:580px;top:371px;width:14px;height:13px;background:linear-gradient(#fbfaf8,#e6e2da);border:1px solid #a8a193;border-radius:2px"></div><svg class="a" style="left:583px;top:374px" width="9" height="6"><path d="M0.5 5.5h8l-4-4.5z" fill="#111"/></svg><div class="a" style="left:580px;top:426px;width:14px;height:136px;background:linear-gradient(90deg,#fbfaf8,#e6e2da);border:1px solid #a8a193;border-radius:2px"></div><div class="a" style="left:583px;top:490px;width:8px;height:1px;background:#a8a193;"></div><div class="a" style="left:583px;top:492.5px;width:8px;height:1px;background:#a8a193;"></div><div class="a" style="left:583px;top:495px;width:8px;height:1px;background:#a8a193;"></div><div class="a" style="left:580px;top:615px;width:14px;height:13px;background:linear-gradient(#fbfaf8,#e6e2da);border:1px solid #a8a193;border-radius:2px"></div><svg class="a" style="left:583px;top:619px" width="9" height="6"><path d="M0.5 0.5h8l-4 4.5z" fill="#111"/></svg><div class="a" style="left:99px;top:632px;width:478px;height:13px;background:#d6d0c6;border-top:1px solid #b8b1a4"></div><div class="a" style="left:99px;top:632px;width:12px;height:13px;background:linear-gradient(#fbfaf8,#e6e2da);border:1px solid #a8a193;border-radius:2px"></div><svg class="a" style="left:102px;top:634.5px" width="6" height="9"><path d="M5 0.5v8l-4.5-4z" fill="#111"/></svg><div class="a" style="left:148px;top:632px;width:366px;height:13px;background:linear-gradient(#fbfaf8,#e6e2da);border:1px solid #a8a193;border-radius:2px"></div><div class="a" style="left:331px;top:635.5px;width:1px;height:6px;background:#a8a193;"></div><div class="a" style="left:333.5px;top:635.5px;width:1px;height:6px;background:#a8a193;"></div><div class="a" style="left:336px;top:635.5px;width:1px;height:6px;background:#a8a193;"></div><div class="a" style="left:564.5px;top:632px;width:12.5px;height:13px;background:linear-gradient(#fbfaf8,#e6e2da);border:1px solid #a8a193;border-radius:2px"></div><svg class="a" style="left:568.5px;top:634.5px" width="6" height="9"><path d="M0.5 0.5v8l4.5-4z" fill="#111"/></svg><div class="t" style="left:102px;top:647px;font-size:11.3px;color:#222;font-weight:normal;letter-spacing:0.106px;">640 x 480 x 256</div><div class="t" style="left:472px;top:647px;width:100px;text-align:right;font-size:11.3px;color:#222">9+0</div><div class="a" style="left:16px;top:658px;width:578px;height:2px;background:#3a3020;"></div><div class="a" style="left:479px;top:48px;width:445px;height:310px;background:#000;"></div><div class="a" style="left:479px;top:48px;width:445px;height:18px;background:linear-gradient(#aea592 0,#a49b89 2px,#8a806e 100%);box-shadow:inset 1px 1px 0 #c4baa6"></div><div class="a" style="left:482px;top:51px;width:12px;height:11px;border-radius:1px;background:linear-gradient(#3d7ac9 0,#3d7ac9 3px,#f2f2f2 3px,#cfcfcf 10px,#4a7cc0 10px);box-shadow:0 0 0 0.5px #6a8ab8"></div><div class="t" style="left:590px;top:52px;width:200px;text-align:center;font-size:9.6px;font-weight:bold;color:#fff">alsamixer</div><div class="a" style="left:885px;top:57.2px;width:5.6px;height:2.6px;background:#fff;"></div><div class="a" style="left:898px;top:52.8px;width:7.6px;height:7.2px;border:1.2px solid #fff;border-top-width:1.6px"></div><svg class="a" style="left:911.5px;top:52.5px" width="8" height="8"><path d="M0.8 0.8L7.2 7.2M7.2 0.8L0.8 7.2" stroke="#fff" stroke-width="1.7"/></svg><div class="a" style="left:479.00px;top:66.00px;width:443.00px;height:290.00px;background:#000"></div><div class="a" style="left:483.65px;top:73.47px;width:161.19px;height:1.00px;background:#00a8a8"></div><div class="a" style="left:753.64px;top:73.47px;width:166.70px;height:1.00px;background:#00a8a8"></div><div class="a" style="left:483.65px;top:348.32px;width:436.69px;height:1.00px;background:#00a8a8"></div><div class="a" style="left:483.65px;top:73.47px;width:1.00px;height:275.85px;background:#00c2c2"></div><div class="a" style="left:918.94px;top:73.47px;width:1.00px;height:102.58px;background:#00c2c2"></div><div class="a" style="left:918.94px;top:258.70px;width:1.00px;height:90.62px;background:#00c2c2"></div><div class="tm" style="left:916.29px;top:175.55px;color:#00c2c2;">&gt;</div><div class="tm" style="left:916.29px;top:187.50px;color:#00c2c2;">&gt;</div><div class="tm" style="left:916.29px;top:199.45px;color:#00c2c2;">&gt;</div><div class="tm" style="left:916.29px;top:211.40px;color:#00c2c2;">&gt;</div><div class="tm" style="left:916.29px;top:223.35px;color:#00c2c2;">&gt;</div><div class="tm" style="left:916.29px;top:235.30px;color:#00c2c2;">&gt;</div><div class="tm" style="left:916.29px;top:247.25px;color:#00c2c2;">&gt;</div><div class="tm" style="left:651.81px;top:68.00px;color:#e6e600;font-weight:bold;">AlsaMixer v1.0.23</div><div class="tm" style="left:492.02px;top:79.95px;color:#00c2c2;">Card:</div><div class="tm" style="left:525.08px;top:79.95px;color:#e6e600;font-weight:bold;">HDA NVidia</div><div class="tm" style="left:492.02px;top:91.90px;color:#00c2c2;">Chip:</div><div class="tm" style="left:525.08px;top:91.90px;color:#e6e600;font-weight:bold;">Realtek ALC883</div><div class="tm" style="left:492.02px;top:103.85px;color:#00c2c2;">View:</div><div class="tm" style="left:525.08px;top:103.85px;color:#00c2c2;">F3:</div><div class="tm" style="left:541.61px;top:103.85px;color:#e6e600;font-weight:bold;">[Playback]</div><div class="tm" style="left:602.22px;top:103.85px;color:#00c2c2;">F4: Capture  F5: All</div><div class="tm" style="left:492.02px;top:115.80px;color:#00c2c2;">Item:</div><div class="tm" style="left:525.08px;top:115.80px;color:#e6e600;font-weight:bold;">Master [dB gain: -12.00]</div><div class="tm" style="left:784.05px;top:79.95px;color:#00c2c2;">F1:  Help</div><div class="tm" style="left:784.05px;top:91.90px;color:#00c2c2;">F2:  System information</div><div class="tm" style="left:784.05px;top:103.85px;color:#00c2c2;">F6:  Select sound card</div><div class="tm" style="left:784.05px;top:115.80px;color:#00c2c2;">Esc: Exit</div><div class="a" style="left:516.72px;top:145.18px;width:18.53px;height:1.00px;background:#00a8a8"></div><div class="a" style="left:516.72px;top:145.18px;width:1.00px;height:144.40px;background:#00c2c2"></div><div class="a" style="left:534.25px;top:145.18px;width:1.00px;height:144.40px;background:#00c2c2"></div><div class="a" style="left:516.72px;top:288.57px;width:18.53px;height:1.00px;background:#00a8a8"></div><div class="a" style="left:519.57px;top:175.55px;width:11.02px;height:47.80px;background:#ececec"></div><div class="a" style="left:519.57px;top:223.35px;width:11.02px;height:59.75px;background:#00d400"></div><div class="a" style="left:516.72px;top:288.57px;width:18.53px;height:1.00px;background:#00a8a8"></div><div class="a" style="left:516.72px;top:288.57px;width:1.00px;height:24.90px;background:#00c2c2"></div><div class="a" style="left:534.25px;top:288.57px;width:1.00px;height:24.90px;background:#00c2c2"></div><div class="a" style="left:516.72px;top:312.48px;width:18.53px;height:1.00px;background:#00a8a8"></div><div class="tm" style="left:519.57px;top:295.05px;color:#f0f0f0;background:#00d400;font-weight:bold;">OO</div><div class="tm" style="left:519.57px;top:318.95px;color:#e6e600;font-weight:bold;">74</div><div class="a" style="left:503.04px;top:330.90px;width:44.08px;height:11.95px;background:#0000f0"></div><div class="tm" style="left:503.04px;top:330.90px;color:#ff2020;font-weight:bold;"> Master </div><div class="a" style="left:566.30px;top:288.57px;width:18.53px;height:1.00px;background:#00a8a8"></div><div class="a" style="left:566.30px;top:288.57px;width:1.00px;height:24.90px;background:#00c2c2"></div><div class="a" style="left:583.83px;top:288.57px;width:1.00px;height:24.90px;background:#00c2c2"></div><div class="a" style="left:566.30px;top:312.48px;width:18.53px;height:1.00px;background:#00a8a8"></div><div class="tm" style="left:569.16px;top:295.05px;color:#f0f0f0;background:#00d400;font-weight:bold;">OO</div><div class="a" style="left:552.63px;top:330.90px;width:44.08px;height:11.95px;background:#0000f0"></div><div class="tm" style="left:552.63px;top:330.90px;color:#f0f0f0;font-weight:bold;">Headphon</div><div class="a" style="left:615.89px;top:145.18px;width:18.53px;height:1.00px;background:#00a8a8"></div><div class="a" style="left:615.89px;top:145.18px;width:1.00px;height:144.40px;background:#00c2c2"></div><div class="a" style="left:633.42px;top:145.18px;width:1.00px;height:144.40px;background:#00c2c2"></div><div class="a" style="left:615.89px;top:288.57px;width:18.53px;height:1.00px;background:#00a8a8"></div><div class="a" style="left:618.75px;top:151.65px;width:11.02px;height:23.90px;background:#ff2020"></div><div class="a" style="left:618.75px;top:175.55px;width:11.02px;height:47.80px;background:#ececec"></div><div class="a" style="left:618.75px;top:223.35px;width:11.02px;height:59.75px;background:#00d400"></div><div class="tm" style="left:602.22px;top:318.95px;color:#e6e600;font-weight:bold;">100</div><div class="tm" style="left:618.75px;top:318.95px;color:#00c2c2;font-weight:bold;">&lt;&gt;</div><div class="tm" style="left:629.77px;top:318.95px;color:#e6e600;font-weight:bold;">100</div><div class="a" style="left:602.22px;top:330.90px;width:44.08px;height:11.95px;background:#0000f0"></div><div class="tm" style="left:602.22px;top:330.90px;color:#f0f0f0;font-weight:bold;">  PCM   </div><div class="a" style="left:665.49px;top:145.18px;width:18.53px;height:1.00px;background:#00a8a8"></div><div class="a" style="left:665.49px;top:145.18px;width:1.00px;height:144.40px;background:#00c2c2"></div><div class="a" style="left:683.01px;top:145.18px;width:1.00px;height:144.40px;background:#00c2c2"></div><div class="a" style="left:665.49px;top:288.57px;width:18.53px;height:1.00px;background:#00a8a8"></div><div class="a" style="left:668.34px;top:175.55px;width:11.02px;height:47.80px;background:#ececec"></div><div class="a" style="left:668.34px;top:223.35px;width:11.02px;height:59.75px;background:#00d400"></div><div class="a" style="left:665.49px;top:288.57px;width:18.53px;height:1.00px;background:#00a8a8"></div><div class="a" style="left:665.49px;top:288.57px;width:1.00px;height:24.90px;background:#00c2c2"></div><div class="a" style="left:683.01px;top:288.57px;width:1.00px;height:24.90px;background:#00c2c2"></div><div class="a" style="left:665.49px;top:312.48px;width:18.53px;height:1.00px;background:#00a8a8"></div><div class="tm" style="left:668.34px;top:295.05px;color:#f0f0f0;background:#00d400;font-weight:bold;">OO</div><div class="tm" style="left:657.32px;top:318.95px;color:#e6e600;font-weight:bold;">74</div><div class="tm" style="left:668.34px;top:318.95px;color:#00c2c2;font-weight:bold;">&lt;&gt;</div><div class="tm" style="left:679.36px;top:318.95px;color:#e6e600;font-weight:bold;">74</div><div class="a" style="left:651.81px;top:330.90px;width:44.08px;height:11.95px;background:#0000f0"></div><div class="tm" style="left:651.81px;top:330.90px;color:#f0f0f0;font-weight:bold;"> Front  </div><div class="a" style="left:715.07px;top:145.18px;width:18.53px;height:1.00px;background:#00a8a8"></div><div class="a" style="left:715.07px;top:145.18px;width:1.00px;height:144.40px;background:#00c2c2"></div><div class="a" style="left:732.60px;top:145.18px;width:1.00px;height:144.40px;background:#00c2c2"></div><div class="a" style="left:715.07px;top:288.57px;width:18.53px;height:1.00px;background:#00a8a8"></div><div class="a" style="left:715.07px;top:288.57px;width:18.53px;height:1.00px;background:#00a8a8"></div><div class="a" style="left:715.07px;top:288.57px;width:1.00px;height:24.90px;background:#00c2c2"></div><div class="a" style="left:732.60px;top:288.57px;width:1.00px;height:24.90px;background:#00c2c2"></div><div class="a" style="left:715.07px;top:312.48px;width:18.53px;height:1.00px;background:#00a8a8"></div><div class="tm" style="left:717.93px;top:295.05px;color:#00c2c2;">MM</div><div class="tm" style="left:712.42px;top:318.95px;color:#e6e600;font-weight:bold;">0</div><div class="tm" style="left:717.93px;top:318.95px;color:#00c2c2;font-weight:bold;">&lt;&gt;</div><div class="tm" style="left:728.95px;top:318.95px;color:#e6e600;font-weight:bold;">0</div><div class="a" style="left:701.40px;top:330.90px;width:44.08px;height:11.95px;background:#0000f0"></div><div class="tm" style="left:701.40px;top:330.90px;color:#f0f0f0;font-weight:bold;">Front Mi</div><div class="a" style="left:764.66px;top:145.18px;width:18.53px;height:1.00px;background:#00a8a8"></div><div class="a" style="left:764.66px;top:145.18px;width:1.00px;height:144.40px;background:#00c2c2"></div><div class="a" style="left:782.20px;top:145.18px;width:1.00px;height:144.40px;background:#00c2c2"></div><div class="a" style="left:764.66px;top:288.57px;width:18.53px;height:1.00px;background:#00a8a8"></div><div class="tm" style="left:762.01px;top:318.95px;color:#e6e600;font-weight:bold;">0</div><div class="tm" style="left:767.52px;top:318.95px;color:#00c2c2;font-weight:bold;">&lt;&gt;</div><div class="tm" style="left:778.54px;top:318.95px;color:#e6e600;font-weight:bold;">0</div><div class="a" style="left:750.99px;top:330.90px;width:44.08px;height:11.95px;background:#0000f0"></div><div class="tm" style="left:750.99px;top:330.90px;color:#f0f0f0;font-weight:bold;">Front Mi</div><div class="a" style="left:814.25px;top:145.18px;width:18.53px;height:1.00px;background:#00a8a8"></div><div class="a" style="left:814.25px;top:145.18px;width:1.00px;height:144.40px;background:#00c2c2"></div><div class="a" style="left:831.78px;top:145.18px;width:1.00px;height:144.40px;background:#00c2c2"></div><div class="a" style="left:814.25px;top:288.57px;width:18.53px;height:1.00px;background:#00a8a8"></div><div class="a" style="left:814.25px;top:288.57px;width:18.53px;height:1.00px;background:#00a8a8"></div><div class="a" style="left:814.25px;top:288.57px;width:1.00px;height:24.90px;background:#00c2c2"></div><div class="a" style="left:831.78px;top:288.57px;width:1.00px;height:24.90px;background:#00c2c2"></div><div class="a" style="left:814.25px;top:312.48px;width:18.53px;height:1.00px;background:#00a8a8"></div><div class="tm" style="left:817.11px;top:295.05px;color:#f0f0f0;background:#00d400;font-weight:bold;">OO</div><div class="tm" style="left:811.60px;top:318.95px;color:#e6e600;font-weight:bold;">0</div><div class="tm" style="left:817.11px;top:318.95px;color:#00c2c2;font-weight:bold;">&lt;&gt;</div><div class="tm" style="left:828.13px;top:318.95px;color:#e6e600;font-weight:bold;">0</div><div class="a" style="left:800.58px;top:330.90px;width:44.08px;height:11.95px;background:#0000f0"></div><div class="tm" style="left:800.58px;top:330.90px;color:#f0f0f0;font-weight:bold;">Surround</div><div class="a" style="left:863.84px;top:145.18px;width:18.53px;height:1.00px;background:#00a8a8"></div><div class="a" style="left:863.84px;top:145.18px;width:1.00px;height:144.40px;background:#00c2c2"></div><div class="a" style="left:881.37px;top:145.18px;width:1.00px;height:144.40px;background:#00c2c2"></div><div class="a" style="left:863.84px;top:288.57px;width:18.53px;height:1.00px;background:#00a8a8"></div><div class="a" style="left:863.84px;top:288.57px;width:18.53px;height:1.00px;background:#00a8a8"></div><div class="a" style="left:863.84px;top:288.57px;width:1.00px;height:24.90px;background:#00c2c2"></div><div class="a" style="left:881.37px;top:288.57px;width:1.00px;height:24.90px;background:#00c2c2"></div><div class="a" style="left:863.84px;top:312.48px;width:18.53px;height:1.00px;background:#00a8a8"></div><div class="tm" style="left:866.70px;top:295.05px;color:#f0f0f0;background:#00d400;font-weight:bold;">OO</div><div class="tm" style="left:866.70px;top:318.95px;color:#e6e600;font-weight:bold;">0</div><div class="a" style="left:850.17px;top:330.90px;width:44.08px;height:11.95px;background:#0000f0"></div><div class="tm" style="left:850.17px;top:330.90px;color:#f0f0f0;font-weight:bold;"> Center </div><div class="tm" style="left:497.53px;top:330.90px;color:#ff2020;">&lt;</div><div class="tm" style="left:547.12px;top:330.90px;color:#ff2020;">&gt;</div><div class="a" style="left:922px;top:66px;width:2px;height:290px;background:#1c1c1c;"></div><div class="a" style="left:479px;top:356.3px;width:445px;height:3.2px;background:#3a2e1c;"></div><div class="a" style="left:660px;top:384px;width:217px;height:276px;background:#efede9;border-left:1px solid #c8c2b6;border-right:1px solid #8a857c"></div><div class="a" style="left:660px;top:384px;width:217px;height:17px;background:linear-gradient(#aea592 0,#a49b89 2px,#8a806e 100%);box-shadow:inset 1px 1px 0 #c4baa6"></div><div class="a" style="left:663px;top:387px;width:12px;height:11px;border-radius:1px;background:linear-gradient(#3d7ac9 0,#3d7ac9 3px,#f2f2f2 3px,#cfcfcf 10px,#4a7cc0 10px);box-shadow:0 0 0 0.5px #6a8ab8"></div><div class="t" style="left:656px;top:388px;width:200px;text-align:center;font-size:9.6px;font-weight:bold;color:#fff">galculator</div><div class="a" style="left:838px;top:393.2px;width:5.6px;height:2.6px;background:#fff;"></div><div class="a" style="left:851px;top:388.8px;width:7.6px;height:7.2px;border:1.2px solid #fff;border-top-width:1.6px"></div><svg class="a" style="left:864.5px;top:388.5px" width="8" height="8"><path d="M0.8 0.8L7.2 7.2M7.2 0.8L0.8 7.2" stroke="#fff" stroke-width="1.7"/></svg><div class="a" style="left:661px;top:401px;width:215px;height:19px;background:#efede9;border-top:1px solid #fbfaf8;border-bottom:1px solid #d8d3ca"></div><div class="t" style="left:667.5px;top:404.5px;font-size:11.3px;color:#1c1c1c;font-weight:normal;text-underline-offset:1.5px"><u>F</u>ile</div><div class="t" style="left:697px;top:404.5px;font-size:11.3px;color:#1c1c1c;font-weight:normal;text-underline-offset:1.5px"><u>E</u>dit</div><div class="t" style="left:728.5px;top:404.5px;font-size:11.3px;color:#1c1c1c;font-weight:normal;text-underline-offset:1.5px"><u>V</u>iew</div><div class="t" style="left:766px;top:404.5px;font-size:11.3px;color:#1c1c1c;font-weight:normal;text-underline-offset:1.5px"><u>C</u>alculator</div><div class="t" style="left:831.5px;top:404.5px;font-size:11.3px;color:#1c1c1c;font-weight:normal;text-underline-offset:1.5px"><u>H</u>elp</div><div class="a" style="left:666px;top:426px;width:205px;height:45px;background:#e3e9b9;border:1px solid #b0ac98;box-shadow:inset 1px 1px 0 #c8c8a8"></div><svg class="a" style="left:840px;top:436px" width="20" height="24" viewBox="840 436 20 24"><path fill-rule="evenodd" fill="#000" d="M850.35 437.9a8.25 10 0 1 0 0.001 0zM850.4 441.6a3.6 6.55 0 1 0 0.001 0z"/></svg><div class="a" style="left:750.2px;top:482.2px;width:36.6px;height:22.5px;border:1px solid #a39c8c;border-radius:3px;background:linear-gradient(#fbfaf8,#f1efeb 55%,#e3dfd7);box-shadow:inset 0 0 0 1px rgba(255,255,255,0.6)"></div><div class="t" style="left:750.2px;top:487.68px;width:36.6px;text-align:center;font-size:10.5px;color:#1c1c1c;">C</div><div class="a" style="left:792.4px;top:482.2px;width:36.6px;height:22.5px;border:1px solid #a39c8c;border-radius:3px;background:linear-gradient(#fbfaf8,#f1efeb 55%,#e3dfd7);box-shadow:inset 0 0 0 1px rgba(255,255,255,0.6)"></div><div class="t" style="left:792.4px;top:487.68px;width:36.6px;text-align:center;font-size:10.5px;color:#1c1c1c;">AC</div><div class="a" style="left:834.3px;top:482.2px;width:36.6px;height:22.5px;border:1px solid #a39c8c;border-radius:3px;background:linear-gradient(#fbfaf8,#f1efeb 55%,#e3dfd7);box-shadow:inset 0 0 0 1px rgba(255,255,255,0.6)"></div><div class="t" style="left:834.3px;top:487.68px;width:36.6px;text-align:center;font-size:10.5px;color:#1c1c1c;">&lt;-</div><div class="a" style="left:665.6px;top:516.2px;width:36.6px;height:22.5px;border:1px solid #a39c8c;border-radius:3px;background:linear-gradient(#fbfaf8,#f1efeb 55%,#e3dfd7);box-shadow:inset 0 0 0 1px rgba(255,255,255,0.6)"></div><div class="t" style="left:665.6px;top:521.68px;width:36.6px;text-align:center;font-size:10.5px;color:#1c1c1c;">(</div><div class="a" style="left:708px;top:516.2px;width:36.6px;height:22.5px;border:1px solid #a39c8c;border-radius:3px;background:linear-gradient(#fbfaf8,#f1efeb 55%,#e3dfd7);box-shadow:inset 0 0 0 1px rgba(255,255,255,0.6)"></div><div class="t" style="left:708px;top:521.68px;width:36.6px;text-align:center;font-size:10.5px;color:#1c1c1c;">)</div><div class="a" style="left:750.2px;top:516.2px;width:36.6px;height:22.5px;border:1px solid #a39c8c;border-radius:3px;background:linear-gradient(#fbfaf8,#f1efeb 55%,#e3dfd7);box-shadow:inset 0 0 0 1px rgba(255,255,255,0.6)"></div><div class="t" style="left:750.2px;top:521.68px;width:36.6px;text-align:center;font-size:10.5px;color:#1c1c1c;">MS<svg width="10" height="7" style="vertical-align:1px;margin-left:1px"><path d="M1 1.2l4 4 4-4" stroke="#111" stroke-width="2.2" fill="none"/></svg></div><div class="a" style="left:792.4px;top:516.2px;width:36.6px;height:22.5px;border:1px solid #a39c8c;border-radius:3px;background:linear-gradient(#fbfaf8,#f1efeb 55%,#e3dfd7);box-shadow:inset 0 0 0 1px rgba(255,255,255,0.6)"></div><div class="t" style="left:792.4px;top:521.68px;width:36.6px;text-align:center;font-size:10.5px;color:#b8b4ac;">MR<svg width="10" height="7" style="vertical-align:1px;margin-left:1px"><path d="M1 1.2l4 4 4-4" stroke="#c0bcb4" stroke-width="2.2" fill="none"/></svg></div><div class="a" style="left:834.3px;top:516.2px;width:36.6px;height:22.5px;border:1px solid #a39c8c;border-radius:3px;background:linear-gradient(#fbfaf8,#f1efeb 55%,#e3dfd7);box-shadow:inset 0 0 0 1px rgba(255,255,255,0.6)"></div><div class="t" style="left:834.3px;top:521.68px;width:36.6px;text-align:center;font-size:10.5px;color:#b8b4ac;">M+<svg width="10" height="7" style="vertical-align:1px;margin-left:1px"><path d="M1 1.2l4 4 4-4" stroke="#c0bcb4" stroke-width="2.2" fill="none"/></svg></div><div class="a" style="left:665.6px;top:545px;width:36.6px;height:22.5px;border:1px solid #a39c8c;border-radius:3px;background:linear-gradient(#fbfaf8,#f1efeb 55%,#e3dfd7);box-shadow:inset 0 0 0 1px rgba(255,255,255,0.6)"></div><div class="t" style="left:665.6px;top:550.48px;width:36.6px;text-align:center;font-size:10.5px;color:#1c1c1c;">7</div><div class="a" style="left:708px;top:545px;width:36.6px;height:22.5px;border:1px solid #a39c8c;border-radius:3px;background:linear-gradient(#fbfaf8,#f1efeb 55%,#e3dfd7);box-shadow:inset 0 0 0 1px rgba(255,255,255,0.6)"></div><div class="t" style="left:708px;top:550.48px;width:36.6px;text-align:center;font-size:10.5px;color:#1c1c1c;">8</div><div class="a" style="left:750.2px;top:545px;width:36.6px;height:22.5px;border:1px solid #a39c8c;border-radius:3px;background:linear-gradient(#fbfaf8,#f1efeb 55%,#e3dfd7);box-shadow:inset 0 0 0 1px rgba(255,255,255,0.6)"></div><div class="t" style="left:750.2px;top:550.48px;width:36.6px;text-align:center;font-size:10.5px;color:#1c1c1c;">9</div><div class="a" style="left:792.4px;top:545px;width:36.6px;height:22.5px;border:1px solid #a39c8c;border-radius:3px;background:linear-gradient(#fbfaf8,#f1efeb 55%,#e3dfd7);box-shadow:inset 0 0 0 1px rgba(255,255,255,0.6)"></div><div class="t" style="left:792.4px;top:550.48px;width:36.6px;text-align:center;font-size:10.5px;color:#1c1c1c;">/</div><div class="a" style="left:834.3px;top:545px;width:36.6px;height:22.5px;border:1px solid #a39c8c;border-radius:3px;background:linear-gradient(#fbfaf8,#f1efeb 55%,#e3dfd7);box-shadow:inset 0 0 0 1px rgba(255,255,255,0.6)"></div><div class="t" style="left:834.3px;top:550.48px;width:36.6px;text-align:center;font-size:10.5px;color:#1c1c1c;">sqrt</div><div class="a" style="left:665.6px;top:573px;width:36.6px;height:22.5px;border:1px solid #a39c8c;border-radius:3px;background:linear-gradient(#fbfaf8,#f1efeb 55%,#e3dfd7);box-shadow:inset 0 0 0 1px rgba(255,255,255,0.6)"></div><div class="t" style="left:665.6px;top:578.48px;width:36.6px;text-align:center;font-size:10.5px;color:#1c1c1c;">4</div><div class="a" style="left:708px;top:573px;width:36.6px;height:22.5px;border:1px solid #a39c8c;border-radius:3px;background:linear-gradient(#fbfaf8,#f1efeb 55%,#e3dfd7);box-shadow:inset 0 0 0 1px rgba(255,255,255,0.6)"></div><div class="t" style="left:708px;top:578.48px;width:36.6px;text-align:center;font-size:10.5px;color:#1c1c1c;">5</div><div class="a" style="left:750.2px;top:573px;width:36.6px;height:22.5px;border:1px solid #a39c8c;border-radius:3px;background:linear-gradient(#fbfaf8,#f1efeb 55%,#e3dfd7);box-shadow:inset 0 0 0 1px rgba(255,255,255,0.6)"></div><div class="t" style="left:750.2px;top:578.48px;width:36.6px;text-align:center;font-size:10.5px;color:#1c1c1c;">6</div><div class="a" style="left:792.4px;top:573px;width:36.6px;height:22.5px;border:1px solid #a39c8c;border-radius:3px;background:linear-gradient(#fbfaf8,#f1efeb 55%,#e3dfd7);box-shadow:inset 0 0 0 1px rgba(255,255,255,0.6)"></div><div class="t" style="left:792.4px;top:578.48px;width:36.6px;text-align:center;font-size:10.5px;color:#1c1c1c;">*</div><div class="a" style="left:834.3px;top:573px;width:36.6px;height:22.5px;border:1px solid #a39c8c;border-radius:3px;background:linear-gradient(#fbfaf8,#f1efeb 55%,#e3dfd7);box-shadow:inset 0 0 0 1px rgba(255,255,255,0.6)"></div><div class="t" style="left:834.3px;top:578.48px;width:36.6px;text-align:center;font-size:10.5px;color:#1c1c1c;">%</div><div class="a" style="left:665.6px;top:601.5px;width:36.6px;height:22.5px;border:1px solid #a39c8c;border-radius:3px;background:linear-gradient(#fbfaf8,#f1efeb 55%,#e3dfd7);box-shadow:inset 0 0 0 1px rgba(255,255,255,0.6)"></div><div class="t" style="left:665.6px;top:606.98px;width:36.6px;text-align:center;font-size:10.5px;color:#1c1c1c;">1</div><div class="a" style="left:708px;top:601.5px;width:36.6px;height:22.5px;border:1px solid #a39c8c;border-radius:3px;background:linear-gradient(#fbfaf8,#f1efeb 55%,#e3dfd7);box-shadow:inset 0 0 0 1px rgba(255,255,255,0.6)"></div><div class="t" style="left:708px;top:606.98px;width:36.6px;text-align:center;font-size:10.5px;color:#1c1c1c;">2</div><div class="a" style="left:750.2px;top:601.5px;width:36.6px;height:22.5px;border:1px solid #a39c8c;border-radius:3px;background:linear-gradient(#fbfaf8,#f1efeb 55%,#e3dfd7);box-shadow:inset 0 0 0 1px rgba(255,255,255,0.6)"></div><div class="t" style="left:750.2px;top:606.98px;width:36.6px;text-align:center;font-size:10.5px;color:#1c1c1c;">3</div><div class="a" style="left:792.4px;top:601.5px;width:36.6px;height:22.5px;border:1px solid #a39c8c;border-radius:3px;background:linear-gradient(#fbfaf8,#f1efeb 55%,#e3dfd7);box-shadow:inset 0 0 0 1px rgba(255,255,255,0.6)"></div><div class="t" style="left:792.4px;top:606.98px;width:36.6px;text-align:center;font-size:10.5px;color:#1c1c1c;">-</div><div class="a" style="left:665.6px;top:630px;width:36.6px;height:22.5px;border:1px solid #a39c8c;border-radius:3px;background:linear-gradient(#fbfaf8,#f1efeb 55%,#e3dfd7);box-shadow:inset 0 0 0 1px rgba(255,255,255,0.6)"></div><div class="t" style="left:665.6px;top:635.48px;width:36.6px;text-align:center;font-size:10.5px;color:#1c1c1c;">0</div><div class="a" style="left:708px;top:630px;width:36.6px;height:22.5px;border:1px solid #a39c8c;border-radius:3px;background:linear-gradient(#fbfaf8,#f1efeb 55%,#e3dfd7);box-shadow:inset 0 0 0 1px rgba(255,255,255,0.6)"></div><div class="t" style="left:708px;top:635.48px;width:36.6px;text-align:center;font-size:10.5px;color:#1c1c1c;">.</div><div class="a" style="left:750.2px;top:630px;width:36.6px;height:22.5px;border:1px solid #a39c8c;border-radius:3px;background:linear-gradient(#fbfaf8,#f1efeb 55%,#e3dfd7);box-shadow:inset 0 0 0 1px rgba(255,255,255,0.6)"></div><div class="t" style="left:750.2px;top:635.48px;width:36.6px;text-align:center;font-size:10.5px;color:#1c1c1c;">+/-</div><div class="a" style="left:792.4px;top:630px;width:36.6px;height:22.5px;border:1px solid #a39c8c;border-radius:3px;background:linear-gradient(#fbfaf8,#f1efeb 55%,#e3dfd7);box-shadow:inset 0 0 0 1px rgba(255,255,255,0.6)"></div><div class="t" style="left:792.4px;top:635.48px;width:36.6px;text-align:center;font-size:10.5px;color:#1c1c1c;">+</div><div class="a" style="left:834.3px;top:601.5px;width:36.6px;height:51.0px;border:1px solid #a39c8c;border-radius:3px;background:linear-gradient(#fbfaf8,#f1efeb 55%,#e3dfd7);box-shadow:inset 0 0 0 1px rgba(255,255,255,0.6)"></div><div class="t" style="left:834.3px;top:621.23px;width:36.6px;text-align:center;font-size:10.5px;color:#1c1c1c;">=</div><div class="a" style="left:660px;top:658px;width:217px;height:2.5px;background:#3a3020;"></div><div class="a" style="left:2px;top:2px;width:940px;height:22px;background:#1f1f2b;"></div><svg class="a" style="left:5px;top:2px" width="24" height="22" viewBox="5 2 24 22"><defs><radialGradient id="lg" cx="0.5" cy="0.5" r="0.5"><stop offset="0" stop-color="#a01010"/><stop offset="0.75" stop-color="#8a0606"/><stop offset="1" stop-color="#6a0202"/></radialGradient><linearGradient id="lgh" x1="0" y1="0" x2="0" y2="1"><stop offset="0" stop-color="#f0b0b0" stop-opacity="0.8"/><stop offset="1" stop-color="#f0b0b0" stop-opacity="0"/></linearGradient></defs><circle cx="16.3" cy="12.6" r="9.3" fill="url(#lg)" stroke="#b8b0b0" stroke-width="0.9"/><ellipse cx="16.3" cy="7.3" rx="5.5" ry="3.2" fill="url(#lgh)"/><ellipse cx="16.3" cy="19.6" rx="4.5" ry="1.8" fill="#e8a0a0" opacity="0.5"/><ellipse cx="16.2" cy="14" rx="2.4" ry="2.8" fill="#000"/><circle cx="16.2" cy="11.2" r="1.5" fill="#000"/><path d="M14 12.5l-2.5-1.5-0.8 1.5M18.4 12.5l2.5-1.5 0.8 1.5M13.8 14h-2.8l-0.8 2M18.6 14h2.8l0.8 2M14.3 15.5l-1.8 2M18.1 15.5l1.8 2" stroke="#000" stroke-width="1.1" fill="none"/></svg><div class="t" style="left:28.5px;top:7.1px;font-size:12.6px;color:#e4e4e8;font-weight:normal;letter-spacing:0.090px;">Applications</div><svg class="a" style="left:857px;top:4px" width="20" height="18" viewBox="857 4 20 18"><path d="M860 10h2.5l3-3v12l-3-3h-2.5z" fill="#d8d8d8"/><path d="M867 10c1 1.5 1 4.5 0 6M869.5 8.5c2 2.5 2 7 0 9.5M872 7c3 3.5 3 9 0 12.5" stroke="#3a6ab0" stroke-width="1.2" fill="none"/></svg><svg class="a" style="left:876px;top:2px" width="26" height="22" viewBox="876 2 26 22"><defs><linearGradient id="scr1" x1="0" y1="0" x2="0" y2="1"><stop offset="0" stop-color="#888"/><stop offset="0.5" stop-color="#222"/><stop offset="1" stop-color="#000"/></linearGradient></defs><rect x="883.5" y="3" width="16" height="11" fill="url(#scr1)" stroke="#ddd" stroke-width="1"/><path d="M891 14v2h-2v1h5v-1h-2v-2z" fill="#bbb"/><rect x="878.5" y="9.5" width="16" height="11" fill="url(#scr1)" stroke="#e4e4e4" stroke-width="1"/><path d="M885 20.5v1.5h-3v1h9v-1h-3v-1.5z" fill="#ccc"/></svg><div class="a" style="left:904.5px;top:3.8px;width:34px;height:19.2px;background:#000;border:1px solid #2a2a34"></div><svg class="a" style="left:905px;top:4px" width="33" height="19" viewBox="905 4 33 19"><path d="M905.5 22.5v-2l1.5 0.5 1.5-0.8 1 0.9 1.5-0.3 1 0.6 1.5-0.2 1-1.2 0.8 0.8 1.2-0.5 1.5 0.6 0.6-11 0.6 10.5 1-1 1.2 0.8 1 -1.5 0.8 1.2 1.2-0.4 1 0.5 1.5-1.2 0.6 1 1.2-0.3 0.8-1.4 0.8 1.6 1.2-0.2 1 -1.5 0.6 2v0.8z" fill="#00c000" stroke="#00dd00" stroke-width="0.5"/></svg><div class="a" style="left:2px;top:685px;width:940px;height:22px;background:#1f1f2b;"></div><div class="a" style="left:3.5px;top:687px;width:24px;height:18px;background:#524c3e;"></div><div class="a" style="left:4.5px;top:695.5px;width:13.5px;height:8px;background:#eeeae0;border:1px solid #222"></div><div class="a" style="left:16.5px;top:688.5px;width:11px;height:7px;background:#eeeae0;border:1px solid #222"></div><div class="a" style="left:19.5px;top:696.5px;width:6.5px;height:7px;background:#eeeae0;border:1px solid #222"></div><div class="a" style="left:28.5px;top:687px;width:24px;height:18px;background:#b6ad9c;"></div><div class="a" style="left:60.7px;top:689px;width:20.3px;height:16.5px;border-radius:1px;background:linear-gradient(#3d7ac9 0,#3d7ac9 3.5px,#f4f4f4 3.5px,#c8c8c8 15px,#4a7cc0 15px)"></div><div class="t" style="left:82.6px;top:691.5px;font-size:12.4px;color:#e2e2e6;font-weight:normal;letter-spacing:0.041px;">alsamixer</div><div class="a" style="left:246px;top:689px;width:20.3px;height:16.5px;border-radius:1px;background:linear-gradient(#3d7ac9 0,#3d7ac9 3.5px,#f4f4f4 3.5px,#c8c8c8 15px,#4a7cc0 15px)"></div><div class="t" style="left:268.1px;top:691.5px;font-size:12.4px;color:#e2e2e6;font-weight:normal;letter-spacing:0.150px;">mtPaint 3.31 (Modified) U...</div><div class="a" style="left:432px;top:689px;width:20.3px;height:16.5px;border-radius:1px;background:linear-gradient(#3d7ac9 0,#3d7ac9 3.5px,#f4f4f4 3.5px,#c8c8c8 15px,#4a7cc0 15px)"></div><div class="t" style="left:453.8px;top:691.5px;font-size:12.4px;color:#e2e2e6;font-weight:normal;letter-spacing:-0.115px;">[SliTaz - System doc - Web...</div><div class="a" style="left:617px;top:689px;width:20.3px;height:16.5px;border-radius:1px;background:linear-gradient(#3d7ac9 0,#3d7ac9 3.5px,#f4f4f4 3.5px,#c8c8c8 15px,#4a7cc0 15px)"></div><div class="t" style="left:638.8px;top:691.5px;font-size:12.4px;color:#e2e2e6;font-weight:normal;letter-spacing:0.327px;">galculator</div><div class="t" style="left:838px;top:689.5px;width:100px;text-align:right;font-size:13.2px;font-weight:bold;color:#ececf0">17:37</div><div class="a" style="left:0px;top:0px;width:2px;height:709px;background:#000;"></div><div class="a" style="left:942px;top:0px;width:2px;height:709px;background:#000;"></div><div class="a" style="left:0px;top:0px;width:944px;height:2px;background:#000;"></div><div class="a" style="left:0px;top:707px;width:944px;height:2px;background:#000;"></div></div></body></html>
